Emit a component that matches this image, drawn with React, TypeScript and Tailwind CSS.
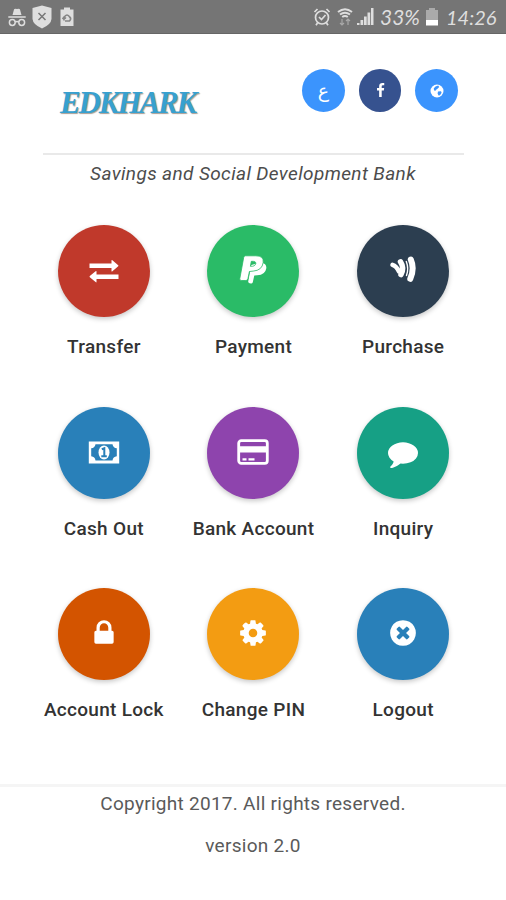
import React from 'react';

const GlyphIcon: React.FC<{ d: string; className?: string }> = ({ d, className = 'h-[30px] w-[30px]' }) => (
    <svg viewBox="0 0 1792 1792" fill="currentColor" className={className}>
        <path d={d} />
    </svg>
);

const TransferIcon = () => (
    <svg viewBox="0 0 30 30" fill="currentColor" className="h-[30px] w-[30px]">
        <path d="M.5 7.400h22V4.600q0-1 .9-.3l5.800 4.900q.5.6 0 1.100l-5.800 4.900q-.9.6-.9-.3v-3H.5zM29.500 23h-22v2.800q0 1-.9.3L.8 21.200q-.5-.6 0-1.100l5.800-4.900q.9-.6.9.3v3h22z" />
    </svg>
);

const PaymentIcon = () => (
    <svg viewBox="0 0 30 30" fill="currentColor" className="h-[30px] w-[30px] -translate-y-px">
        <path d="M13.500 28.500q-3.800.3-3.200-2.500l3-16 10-2.500q5.500 1 5 5.800-.9 6.500-9 7l-3 .3-1.400 6.200q-.2 1.600-1.400 1.700z" />
        <path
            stroke="#2abb67"
            strokeWidth="0.8"
            fillRule="evenodd"
            d="M7.500.8h10.200q8.300 0 7.500 6.600-1 8-10 8.700l-3.800.4-1.500 7.300q-.3 1.700-2 1.700H3.200q-1.800 0-1.400-1.800L5.700 2.500Q6 .8 7.500.8zM13.300 6.300l-.9 5q4.800.4 5.400-2.800.4-2.500-4.500-2.200z"
        />
    </svg>
);

const WalletIcon = () => (
    <svg viewBox="0 0 30 30" fill="none" stroke="currentColor" strokeLinecap="round" className="h-[30px] w-[30px]">
        <path d="M4.500 8.800Q8.500 10 11 15.500" strokeWidth="4.500" />
        <path d="M12.500 5.800Q16.500 12 13 18.500" strokeWidth="5.500" />
        <path d="M18.300 5.500Q21 12.500 18.500 19.500" strokeWidth="1.400" />
        <path d="M22.800 3.500Q26.800 12.500 22.300 22.800" strokeWidth="6" />
    </svg>
);

const CashIcon = () => (
    <svg viewBox="0 0 32 24" className="h-6 w-8">
        <path fill="currentColor" fillRule="evenodd" d="M.8 .5h30.400v22H.8zM7.500 3.200Q7 6.800 3.200 7.300v8q3.800.5 4.300 4.300h17q.5-3.800 4.300-4.300v-8q-3.800-.5-4.300-4.100z" />
        <ellipse cx="16" cy="11.500" rx="5.500" ry="7" fill="currentColor" />
        <path d="M13.800 8.300 16.300 7.300v7.500M13.300 15.200h5.500" fill="none" stroke="#2980b9" strokeWidth="2" />
    </svg>
);

const CardIcon = () => (
    <svg viewBox="0 0 32 26" className="h-[26px] w-8 -translate-y-px">
        <rect x="1.700" y="1.700" width="28.600" height="22.600" rx="2.600" fill="none" stroke="currentColor" strokeWidth="2.800" />
        <path fill="currentColor" d="M2 7.200h28v6.300H2zM5.500 19.300h4v2.200h-4zM11.500 19.300h6v2.200h-6z" />
    </svg>
);

const GlobeIcon = () => (
    <svg viewBox="0 0 14 14" className="h-3.5 w-3.5">
        <circle cx="7" cy="7" r="6.500" fill="white" />
        <path fill="#3b94fd" d="M5.500 2.500 8.200 1.600 9.200 3 7.500 4.800 5.800 6 5.300 7 4 6.300 3.800 4.200zM8 7.500 11 7.300 11.600 8.800 10 11.200 8.500 11.500 7.600 9.500z" />
    </svg>
);

const LOCK = 'M640 768h512v-192q0-106-75-181t-181-75-181 75-75 181v192zm832 96v576q0 40-28 68t-68 28h-960q-40 0-68-28t-28-68v-576q0-40 28-68t68-28h32v-192q0-184 132-316t316-132 316 132 132 316v192h32q40 0 68 28t28 68z';
const COG = 'M1152 896q0-106-75-181t-181-75-181 75-75 181 75 181 181 75 181-75 75-181zm512-109v222q0 12-8 23t-20 13l-185 28q-19 54-39 91 35 50 107 138 10 12 10 25t-9 23q-27 37-99 108t-94 71q-12 0-26-9l-138-108q-44 23-91 38-16 136-29 186-7 28-36 28h-222q-14 0-24.5-8.5t-11.5-21.5l-28-184q-49-16-90-37l-141 107q-10 9-25 9-14 0-25-11-126-114-165-168-7-10-7-23 0-12 8-23 15-21 51-66.5t54-70.5q-27-50-41-99l-183-27q-13-2-21-12.5t-8-23.5v-222q0-12 8-23t19-13l186-28q14-46 39-92-40-57-107-138-10-12-10-24 0-10 9-23 26-36 98.5-107.5t94.5-71.5q13 0 26 10l138 107q44-23 91-38 16-136 29-186 7-28 36-28h222q14 0 24.5 8.5t11.5 21.5l28 184q49 16 90 37l142-107q9-9 24-9 13 0 25 10 129 119 165 170 7 8 7 22 0 12-8 23-15 21-51 66.5t-54 70.5q26 50 41 98l183 28q13 2 21 12.5t8 23.5z';
const CLOSE = 'M1277 1122q0-26-19-45l-181-181 181-181q19-19 19-45 0-27-19-46l-90-90q-19-19-46-19-26 0-45 19l-181 181-181-181q-19-19-45-19-27 0-46 19l-90 90q-19 19-19 46 0 26 19 45l181 181-181 181q-19 19-19 45 0 27 19 46l90 90q19 19 46 19 26 0 45-19l181-181 181 181q19 19 45 19 27 0 46-19l90-90q19-19 19-46zm387-226q0 209-103 385.5t-279.5 279.5-385.5 103-385.5-103-279.5-279.5-103-385.5 103-385.5 279.5-279.5 385.5-103 385.5 103 279.5 279.5 103 385.5z';
const COMMENT = 'M1792 896q0 174-120 321.5t-326 233-450 85.5q-70 0-145-8-198 175-460 242-49 14-114 22-17 2-30.5-9t-17.5-29v-1q-3-4-.5-12t2-10 4.5-9.5l6-9 7-8.5 8-9q7-8 31-34.5t34.5-38 31-39.5 32.5-51 27-59 26-76q-157-89-247.5-220t-90.5-281q0-130 71-248.5t191-204.5 286-136.5 348-50.5 348 50.5 286 136.5 191 204.5 71 248.5z';
const FACEBOOK = 'M1343 12v264h-157q-86 0-116 36t-30 108v189h293l-39 296h-254v759h-306v-759h-255v-296h255v-218q0-186 104-288.5t277-102.5q147 0 228 12z';

const actions = [
    { label: 'Transfer', color: 'bg-[#c0392b]', icon: <TransferIcon /> },
    { label: 'Payment', color: 'bg-[#2abb67]', icon: <PaymentIcon /> },
    { label: 'Purchase', color: 'bg-[#2c3e50]', icon: <WalletIcon /> },
    { label: 'Cash Out', color: 'bg-[#2980b9]', icon: <CashIcon /> },
    { label: 'Bank Account', color: 'bg-[#8e44ad]', icon: <CardIcon /> },
    { label: 'Inquiry', color: 'bg-[#16a085]', icon: <GlyphIcon d={COMMENT} /> },
    { label: 'Account Lock', color: 'bg-[#d35400]', icon: <GlyphIcon d={LOCK} className="h-[30px] w-[30px] -translate-y-px" /> },
    { label: 'Change PIN', color: 'bg-[#f39c12]', icon: <GlyphIcon d={COG} className="h-[30px] w-[30px] -translate-y-px" /> },
    { label: 'Logout', color: 'bg-[#2980b9]', icon: <GlyphIcon d={CLOSE} className="h-[30px] w-[30px] -translate-y-px" /> },
];

const StatusBar = () => (
    <div className="flex h-[34px] items-center border-b border-[#666] bg-[#757575] px-2 text-[#dedede]">
        <svg viewBox="0 0 18 20" className="h-5 w-[18px]">
            <path fill="currentColor" d="M4.500 8 6 2.500q.3-1 3-.5 2.700-.5 3 .5L13.500 8zM.3 9.200h17.400v1.600H.3z" />
            <g fill="none" stroke="currentColor" strokeWidth="1.500">
                <circle cx="4.300" cy="15.500" r="2.900" />
                <circle cx="13.700" cy="15.500" r="2.900" />
                <path d="M7.200 15q1.800-1 3.600 0" />
            </g>
        </svg>
        <svg viewBox="0 0 20 24" className="ml-1.5 h-6 w-5">
            <path fill="currentColor" d="M10 .5 19.500 3v11q-.5 5.500-9.500 9.500Q1 19.500.5 14V3z" />
            <path d="m6.500 8 7 7m0-7-7 7" stroke="#777" strokeWidth="1.500" />
        </svg>
        <svg viewBox="0 0 14 20" className="ml-2 h-5 w-3.5">
            <path fill="currentColor" d="M4 .5h6v2h3.500V19H.5V2.500H4z" />
            <path d="M4 13.500V10.500Q7 5.500 10 10.500M5 14h4.500q2-2 .5-4M2.500 12 4 10l2 1.500" fill="none" stroke="#858585" strokeWidth="1.600" />
        </svg>
        <div className="flex-1" />
        <svg viewBox="0 0 18 20" fill="none" stroke="currentColor" strokeWidth="1.700" className="h-5 w-[18px]">
            <circle cx="9" cy="10.500" r="6.500" />
            <path d="M1.500 5 4.500 2M13.500 2l3 3M4.500 16 3 18.300M13.500 16l1.500 2.300M6 10l2.500 2.500L12.500 8" />
        </svg>
        <svg viewBox="0 0 16 20" fill="none" stroke="currentColor" className="ml-1.5 h-5 w-4">
            <path d="M1 5Q8-.5 15 5M3 7.500q5-3.500 10 0M5.200 10q2.800-2 5.600 0" strokeWidth="2" />
            <path d="M5 12v6m-2-2 2 2 2-2M11 18v-6m-2 2 2-2 2 2" strokeWidth="1.200" opacity=".5" />
        </svg>
        <svg viewBox="0 0 18 20" fill="currentColor" className="ml-[3px] h-5 w-[18px]">
            <path d="M1 16h2.500v2H1zM4.500 13h2.700v5H4.500zM8 9.500h2.700V18H8zM11.500 5.500h2.700V18h-2.700zM15 1h2.500v17H15z" />
        </svg>
        <span className="ml-1.5 w-[42px] whitespace-nowrap font-['Lato','Liberation_Sans',sans-serif] text-[21px] italic leading-5">33%</span>
        <svg viewBox="0 0 12 18" className="ml-1 h-[18px] w-3">
            <path fill="#aaa" d="M3 0h6v2h3v10H0V2h3z" />
            <path fill="white" d="M0 12h12v5.500H0z" />
        </svg>
        <span className="ml-2 mr-0.5 w-[50px] whitespace-nowrap text-right font-['Lato','Liberation_Sans',sans-serif] text-[20px] italic leading-5">14:26</span>
    </div>
);

export default function App() {
    return (
        <div className="flex h-[900px] w-[506px] flex-col overflow-hidden bg-white font-['Roboto','Liberation_Sans',sans-serif]">
            <StatusBar />

            <header className="ml-[43px] mr-[42px] flex h-[121px] justify-between border-b-2 border-[#e9e9e9] pl-[17px] pr-[6px] pt-[35px]">
                <h1 className="mt-[14px] h-10 font-['Liberation_Serif',serif] text-[31px] font-bold italic leading-10 tracking-[-2.1px] text-[#38a0cf] [text-shadow:1px_1px_1px_#a89d94]">
                    EDKHARK
                </h1>
                <div className="flex gap-[14px] text-white">
                    <button className="flex h-[43px] w-[43px] items-center justify-center rounded-full bg-[#3b94fd] font-['DejaVu_Sans',sans-serif] text-[19px]">
                        ع
                    </button>
                    <button className="flex h-[43px] w-[42px] items-center justify-center rounded-full bg-[#36528f]">
                        <GlyphIcon d={FACEBOOK} className="h-[15px] w-[15px]" />
                    </button>
                    <button className="flex h-[43px] w-[43px] items-center justify-center rounded-full bg-[#3b94fd]">
                        <GlobeIcon />
                    </button>
                </div>
            </header>
            <p className="mt-1 text-center text-[19px] italic leading-[30px] tracking-[0.38px] text-[#4c4c4c]">
                Savings and Social Development Bank
            </p>

            <main className="ml-[29px] mt-9 grid w-[449px] auto-rows-[181.5px] grid-cols-3">
                {actions.map((action) => (
                    <button key={action.label} className="flex flex-col items-center">
                        <span className={`flex h-[92px] w-[92px] items-center justify-center rounded-full text-white shadow-[0_2px_5px_rgba(0,0,0,0.22)] ${action.color}`}>
                            {action.icon}
                        </span>
                        <span className="mt-4 whitespace-nowrap text-[19px] font-medium leading-7 tracking-[0.3px] text-[#333]">
                            {action.label}
                        </span>
                    </button>
                ))}
            </main>

            <footer className="mt-[14px] border-t-[3px] border-[#f5f5f5] text-center text-[19px] leading-[30px] tracking-[0.28px] text-[#5a5a5a]">
                <p className="mt-0.5">Copyright 2017. All rights reserved.</p>
                <p className="mt-3">version 2.0</p>
            </footer>
        </div>
    );
}
